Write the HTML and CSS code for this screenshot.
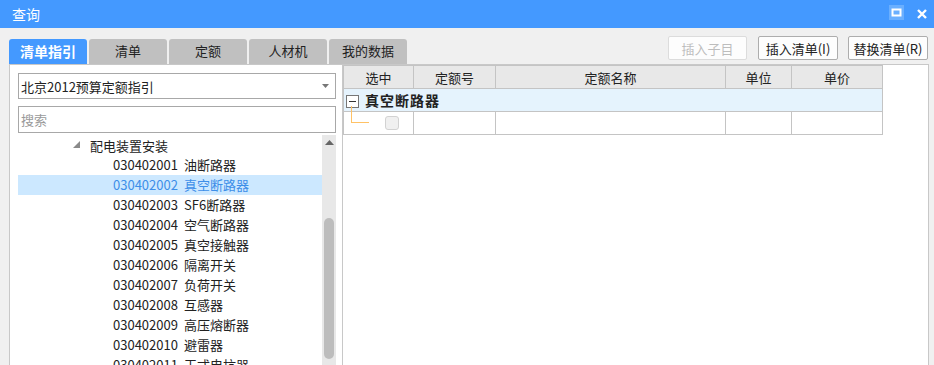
FILE: index.html
```html
<!DOCTYPE html>
<html lang="zh-CN">
<head>
    <meta charset="UTF-8">
    <title>查询</title>
    <link rel="stylesheet" href="styles.css">
</head>
<body>
    <header class="titlebar">
        <span class="title">查询</span>
        <div class="win-btns">
            <span class="win-max"><svg width="15" height="15" viewBox="0 0 15 15"><rect x="3.5" y="4.5" width="8" height="6" fill="none" stroke="#fff" stroke-width="2"/></svg></span>
            <span class="win-close"><svg width="10" height="10" viewBox="0 0 10 10"><path d="M1 1L9 9M9 1L1 9" stroke="#fff" stroke-width="2.4"/></svg></span>
        </div>
    </header>

    <div class="toolbar">
        <ul class="tabs">
            <li class="tab active">清单指引</li>
            <li class="tab">清单</li>
            <li class="tab">定额</li>
            <li class="tab">人材机</li>
            <li class="tab">我的数据</li>
        </ul>
        <div class="actions">
            <button class="btn" disabled>插入子目</button>
            <button class="btn">插入清单(I)</button>
            <button class="btn">替换清单(R)</button>
        </div>
    </div>

    <main class="content">
        <!-- 左侧：清单指引树 -->
        <section class="left-panel">
            <div class="select-box">
                <span>北京2012预算定额指引</span>
                <svg width="7" height="4" viewBox="0 0 7 4"><path d="M0 0H7L3.5 4Z" fill="#777"/></svg>
            </div>
            <div class="search-box">搜索</div>
            <div class="tree-wrap">
                <ul class="tree">
                    <li class="tree-parent">
                        <svg class="tree-arrow" width="7" height="7" viewBox="0 0 7 7"><path d="M7 0V7H0Z" fill="#8a8a8a"/></svg>
                        配电装置安装
                    </li>
                    <li class="tree-item"><span class="code">030402001</span>油断路器</li>
                    <li class="tree-item selected"><span class="code">030402002</span>真空断路器</li>
                    <li class="tree-item"><span class="code">030402003</span>SF6断路器</li>
                    <li class="tree-item"><span class="code">030402004</span>空气断路器</li>
                    <li class="tree-item"><span class="code">030402005</span>真空接触器</li>
                    <li class="tree-item"><span class="code">030402006</span>隔离开关</li>
                    <li class="tree-item"><span class="code">030402007</span>负荷开关</li>
                    <li class="tree-item"><span class="code">030402008</span>互感器</li>
                    <li class="tree-item"><span class="code">030402009</span>高压熔断器</li>
                    <li class="tree-item"><span class="code">030402010</span>避雷器</li>
                    <li class="tree-item"><span class="code">030402011</span>干式电抗器</li>
                </ul>
                <div class="scrollbar">
                    <svg class="scroll-up" width="9" height="5" viewBox="0 0 9 5"><path d="M0 5H9L4.5 0Z" fill="#666"/></svg>
                    <div class="thumb"></div>
                </div>
            </div>
        </section>

        <!-- 右侧：定额表 -->
        <section class="right-panel">
            <table class="grid">
                <colgroup>
                    <col style="width:70px">
                    <col style="width:82px">
                    <col style="width:230px">
                    <col style="width:66px">
                    <col style="width:91px">
                </colgroup>
                <thead>
                    <tr><th>选中</th><th>定额号</th><th>定额名称</th><th>单位</th><th>单价</th></tr>
                </thead>
                <tbody>
                    <tr class="group-row">
                        <td colspan="5"><span class="collapse-box"></span>真空断路器</td>
                    </tr>
                    <tr>
                        <td class="check-cell"><span class="tree-line"></span><span class="checkbox"></span></td>
                        <td></td><td></td><td></td><td></td>
                    </tr>
                </tbody>
            </table>
        </section>
    </main>
</body>
</html>
```

FILE: styles.css
```css
body {
    margin: 0;
    background: #f0f0f0;
    font-family: "Microsoft YaHei", "Noto Sans CJK SC", sans-serif;
    font-size: 13px;
    color: #222;
    height: 365px;
    overflow: hidden;
}

.titlebar {
    height: 28px;
    background: #4499ff;
    display: flex;
    align-items: center;
    justify-content: space-between;
    padding: 0 7px 0 12px;
}

.title {
    color: #fff;
    font-size: 14px;
}

.win-btns {
    display: flex;
    align-items: center;
    gap: 13px;
}

.win-max {
    width: 15px;
    height: 15px;
    background: #6aafff;
    display: flex;
    margin-top: -4px;
}

.win-close {
    display: flex;
}

.toolbar {
    height: 36px;
    display: flex;
    justify-content: space-between;
    padding: 0 6px 0 9px;
}

.tabs {
    list-style: none;
    margin: 11px 0 0;
    padding: 0;
    display: flex;
    gap: 2px;
}

.tab {
    width: 78px;
    height: 25px;
    line-height: 24px;
    text-align: center;
    background: #c0c0c0;
    border-radius: 3px 3px 0 0;
    color: #222;
}

.tab.active {
    background: #4499ff;
    color: #fff;
    font-weight: bold;
    font-size: 14px;
}

.actions {
    display: flex;
    gap: 10px;
    margin-top: 8px;
}

.btn {
    height: 24px;
    padding: 0;
    width: 80px;
    font-family: inherit;
    font-size: 13px;
    color: #222;
    background: #fdfdfd;
    border: 1px solid #adadad;
    border-radius: 2px;
}

.btn:disabled {
    width: 79px;
    color: #bdbdbd;
    border-color: #dcdcdc;
    margin-right: 1px;
}

.content {
    display: flex;
    padding-left: 9px;
    height: 301px;
}

.left-panel {
    background: #fff;
    border: 1px solid #c8c8c8;
    border-bottom: none;
    padding: 8px 6px 0 8px;
    box-sizing: border-box;
    width: 334px;
    display: flex;
    flex-direction: column;
}

.select-box {
    height: 26px;
    border: 1px solid #a8a8a8;
    box-sizing: border-box;
    display: flex;
    align-items: center;
    justify-content: space-between;
    padding: 0 6px 0 2px;
    font-size: 13px;
}

.search-box {
    height: 27px;
    margin-top: 7px;
    border: 1px solid #a8a8a8;
    box-sizing: border-box;
    padding-left: 2px;
    line-height: 25px;
    color: #9a9a9a;
}

.tree-wrap {
    flex: 1;
    display: flex;
    margin-top: 2px;
    overflow: hidden;
}

.tree {
    list-style: none;
    margin: 0;
    padding: 0;
    flex: 1;
}

.tree li {
    height: 20px;
    line-height: 19px;
    white-space: nowrap;
}

.tree-parent {
    padding-left: 55px;
    display: flex;
    align-items: center;
}

.tree-arrow {
    margin-right: 10px;
    margin-top: -1px;
}

.tree-item {
    padding-left: 95px;
}

.tree-item .code {
    display: inline-block;
    width: 71px;
}

.tree-item.selected {
    background: #cce8ff;
    color: #3d8ee8;
}

.scrollbar {
    width: 14px;
    background: #e8e8e8;
    position: relative;
}

.scroll-up {
    display: block;
    margin: 5px auto 0;
}

.thumb {
    position: absolute;
    left: 2px;
    right: 2px;
    top: 83px;
    height: 141px;
    background: #bdbdbd;
    border-radius: 5px;
}

.right-panel {
    width: 586px;
    background: #fff;
    border: 1px solid #c8c8c8;
    border-left: none;
    border-bottom: none;
    box-sizing: border-box;
}

.grid {
    border-collapse: collapse;
    table-layout: fixed;
    width: 540px;
}

.grid th,
.grid td {
    border: 1px solid #c4c4c4;
    height: 22px;
    padding: 0;
    font-weight: normal;
}

.grid th {
    background: #e8e8e8;
    font-size: 13px;
    text-align: center;
}

.group-row td {
    background: #e5f3fd;
    font-weight: bold;
    font-size: 14px;
    letter-spacing: 1px;
    padding-left: 2px;
}

.collapse-box {
    display: inline-block;
    width: 11px;
    height: 11px;
    border: 1px solid #777;
    background: #fff;
    vertical-align: -2px;
    margin-right: 6px;
    position: relative;
}

.collapse-box::after {
    content: "";
    position: absolute;
    left: 2px;
    right: 2px;
    top: 5px;
    height: 1px;
    background: #333;
}

.check-cell {
    position: relative;
}

.tree-line {
    position: absolute;
    left: 7px;
    top: -6px;
    width: 17px;
    height: 16px;
    border-left: 1px solid #ffc266;
    border-bottom: 1px solid #ffc266;
}

.checkbox {
    display: block;
    width: 12px;
    height: 12px;
    margin-left: 41px;
    background: #f0f0f0;
    border: 1px solid #d2d2d2;
    border-radius: 3px;
}
```
